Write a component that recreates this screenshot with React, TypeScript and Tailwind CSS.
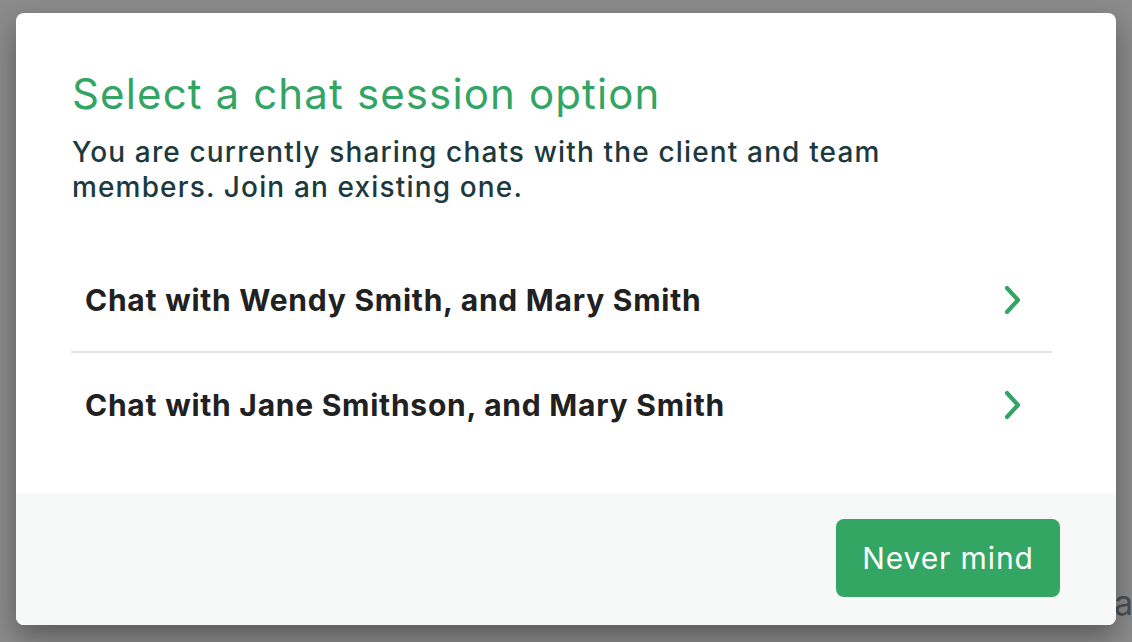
import React from 'react'

const sessions = [
  'Chat with Wendy Smith, and Mary Smith',
  'Chat with Jane Smithson, and Mary Smith',
]

function Chevron() {
  return (
    <svg width="20" height="30" viewBox="0 0 20 30" fill="none" className="shrink-0">
      <polyline
        points="4,3 15,15 4,27"
        stroke="#32a564"
        strokeWidth="4.2"
        strokeLinecap="round"
        strokeLinejoin="round"
      />
    </svg>
  )
}

export default function App() {
  return (
    <div
      className="relative h-[642px] w-[1132px] overflow-hidden bg-[#8b8b8b]"
      style={{ fontFamily: 'Inter, "Noto Sans", sans-serif' }}
    >
      {/* page content behind the overlay */}
      <span className="absolute left-[1114px] top-[577px] text-[34px] text-[#4a4f52]">a</span>

      <div className="absolute left-[16px] top-[13px] flex h-[612px] w-[1100px] flex-col overflow-hidden rounded-[8px] bg-white shadow-[0_12px_28px_rgba(0,0,0,0.35)]">
        <div className="flex flex-1 flex-col pl-[55px] pr-[64px] pt-[56px]">
          <h2 className="pl-[1px] text-[42px] leading-[50px] font-normal tracking-[0.027em] text-[#32a564]">
            Select a chat session option
          </h2>
          <p className="mt-[16px] max-w-[840px] pl-[1px] text-[28px] leading-[35px] font-[450] tracking-[0.041em] text-[#1c3a3e]">
            You are currently sharing chats with the client and team members. Join an existing one.
          </p>

          <div className="mt-[44px] flex flex-col">
            {sessions.map((s, i) => (
              <button
                key={s}
                className={`flex h-[104px] items-center justify-between pl-[14px] pr-[29px] text-left ${
                  i === 0 ? 'border-b-2 border-[#e2e2e2]' : ''
                }`}
              >
                <span className="text-[30px] font-bold tracking-[0.025em] text-[#212121]">{s}</span>
                <Chevron />
              </button>
            ))}
          </div>
        </div>

        <div className="flex h-[132px] items-start justify-end bg-[#f7f9f9] pr-[56px] pt-[26px]">
          <button className="flex h-[78px] w-[224px] items-center justify-center rounded-[8px] bg-[#33a664] text-[30px] tracking-[0.03em] text-white">
            Never mind
          </button>
        </div>
      </div>
    </div>
  )
}
